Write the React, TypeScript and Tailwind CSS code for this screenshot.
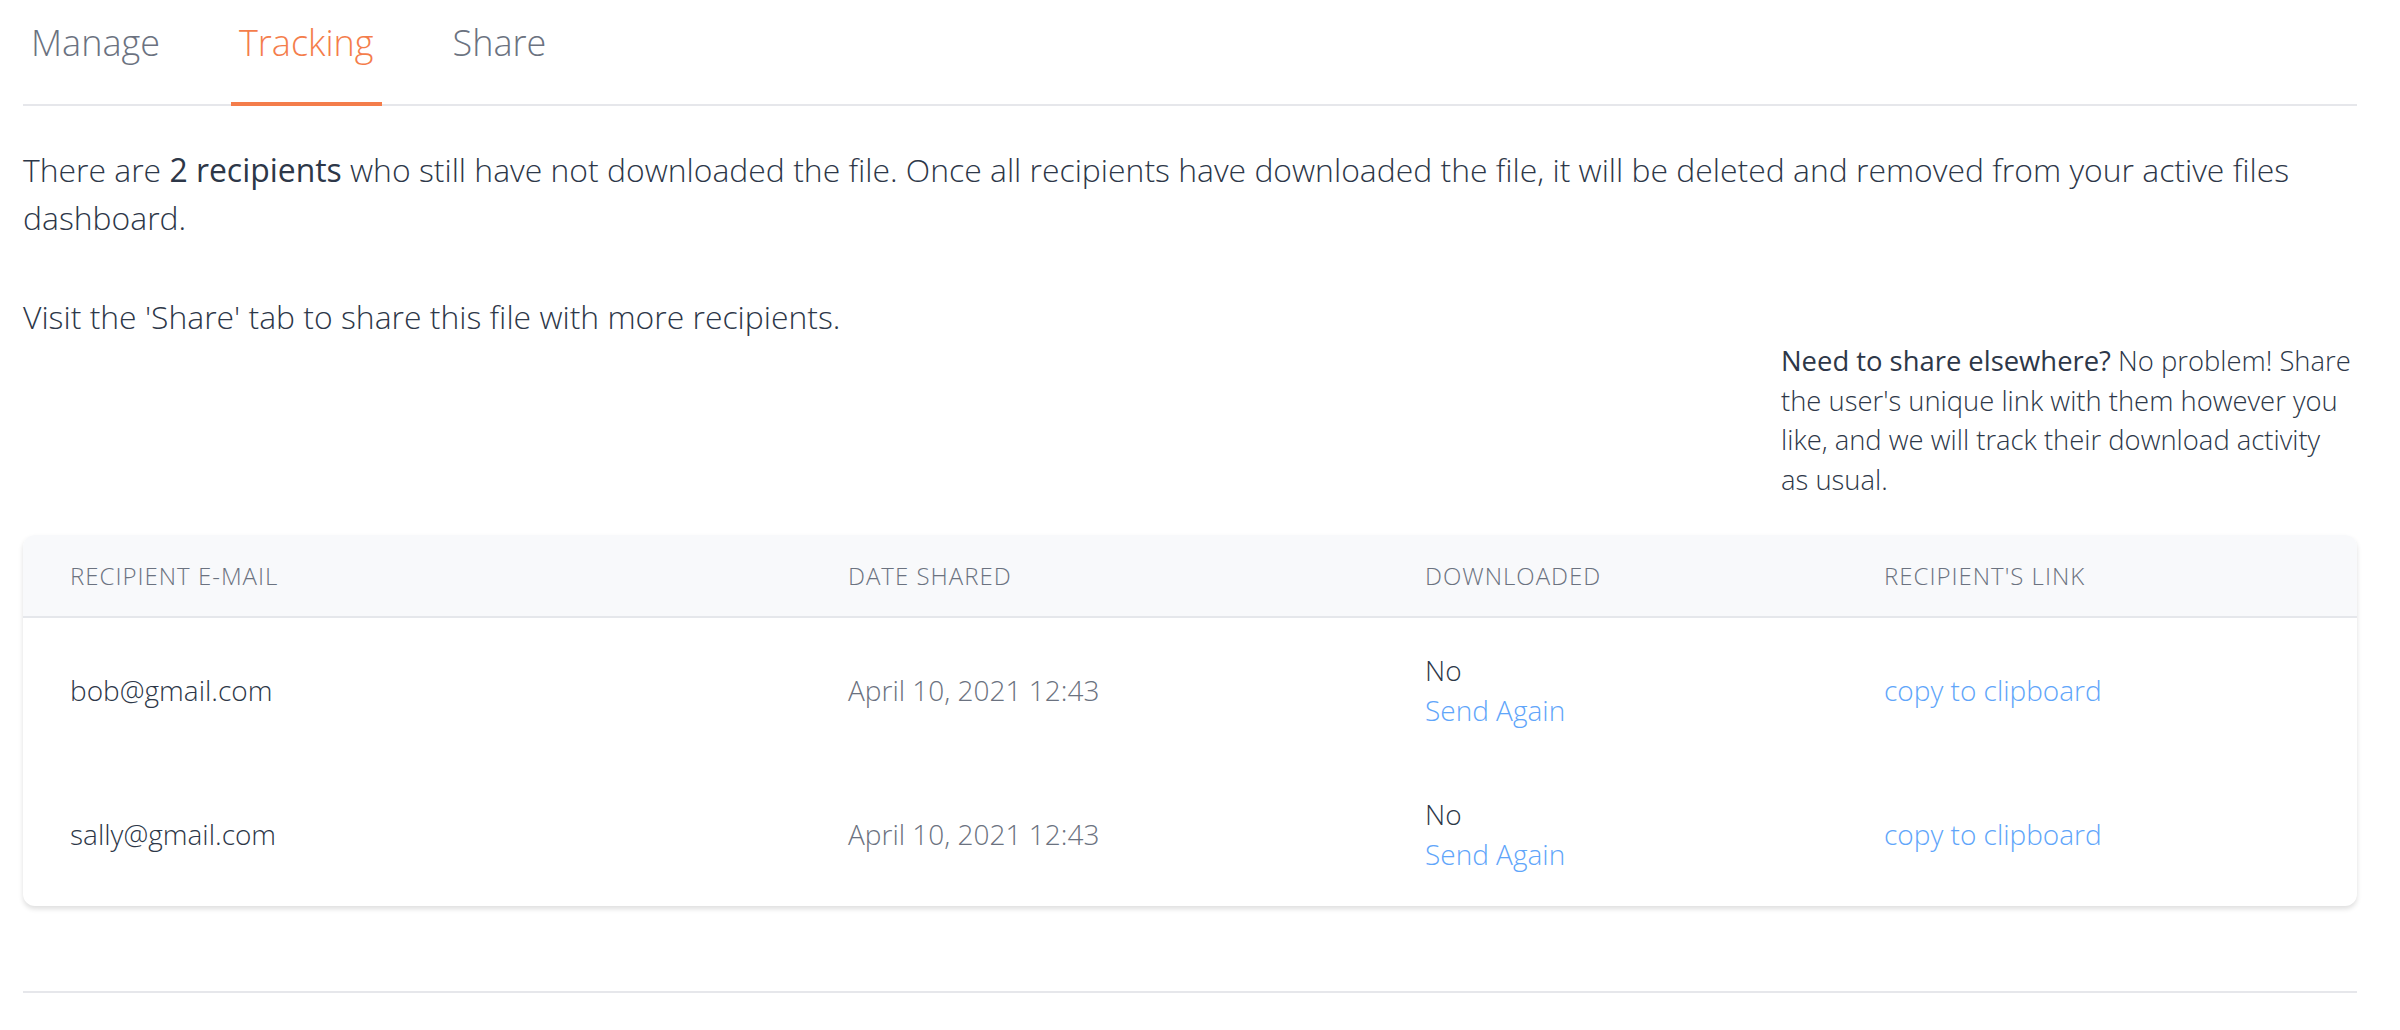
import { useState } from 'react'

// Recipients tracking tab
const recipients = [
  { email: 'bob@gmail.com', date: 'April 10, 2021 12:43' },
  { email: 'sally@gmail.com', date: 'April 10, 2021 12:43' },
]

const tabs = ['Manage', 'Tracking', 'Share']

export default function App() {
  const [active, setActive] = useState('Tracking')

  return (
    <main className="w-full min-h-screen bg-white pl-[23px] pr-[43px] font-['Open_Sans',sans-serif] font-light text-[#2d3748]">
      {/* Tabs */}
      <nav className="flex gap-[63px] border-b-2 border-[#e6e7eb]">
        {tabs.map((tab) => (
          <button
            key={tab}
            onClick={() => setActive(tab)}
            className={
              tab === active
                ? 'px-2 pt-4 pb-[32px] -mb-[2px] border-b-4 border-[#f47d4b] text-[36px] leading-[54px] text-[#f47d4b]'
                : 'px-2 pt-4 pb-[32px] -mb-[2px] border-b-4 border-transparent text-[36px] leading-[54px] text-[#6b7280]'
            }
          >
            {tab}
          </button>
        ))}
      </nav>

      {/* Intro */}
      <p className="mt-10 text-[31.9px] leading-[48px]">
        There are <span className="font-normal">2 recipients</span> who still have not downloaded the file. Once all
        recipients have downloaded the file, it will be deleted and removed from your active files dashboard.
      </p>
      <p className="mt-[51px] text-[31.9px] leading-[48px]">Visit the 'Share' tab to share this file with more recipients.</p>

      {/* Side note */}
      <p className="ml-auto w-[576px] text-[27.4px] leading-[39.5px]">
        <span className="font-normal">Need to share elsewhere?</span> No problem! Share the user's unique link with them
        however you like, and we will track their download activity
        <br />
        as usual.
      </p>

      {/* Table */}
      <section className="mt-9 rounded-xl bg-white shadow-[0_3px_5px_rgba(0,0,0,0.13)] overflow-hidden">
        <div className="grid grid-cols-[778px_577px_459px_1fr] items-center h-[83px] pl-[47px] bg-[#f8f9fb] border-b-2 border-[#e5e7eb] text-[24px] tracking-[1px] text-[#6b7280]">
          <div>RECIPIENT E-MAIL</div>
          <div>DATE SHARED</div>
          <div>DOWNLOADED</div>
          <div>RECIPIENT'S LINK</div>
        </div>
        {recipients.map((r) => (
          <div key={r.email} className="grid grid-cols-[778px_577px_459px_1fr] items-center h-[144px] pl-[47px] text-[28px]">
            <div className="text-[#2d3748]">{r.email}</div>
            <div className="text-[#6b7280]">{r.date}</div>
            <div className="flex flex-col leading-[40px]">
              <span className="text-[#2d3748]">No</span>
              <a className="text-[#60a5fa] cursor-pointer">Send Again</a>
            </div>
            <div>
              <a className="text-[#60a5fa] cursor-pointer">copy to clipboard</a>
            </div>
          </div>
        ))}
      </section>

      {/* Footer rule */}
      <div className="mt-[85px] border-t-2 border-[#e6e7eb]" />
    </main>
  )
}
